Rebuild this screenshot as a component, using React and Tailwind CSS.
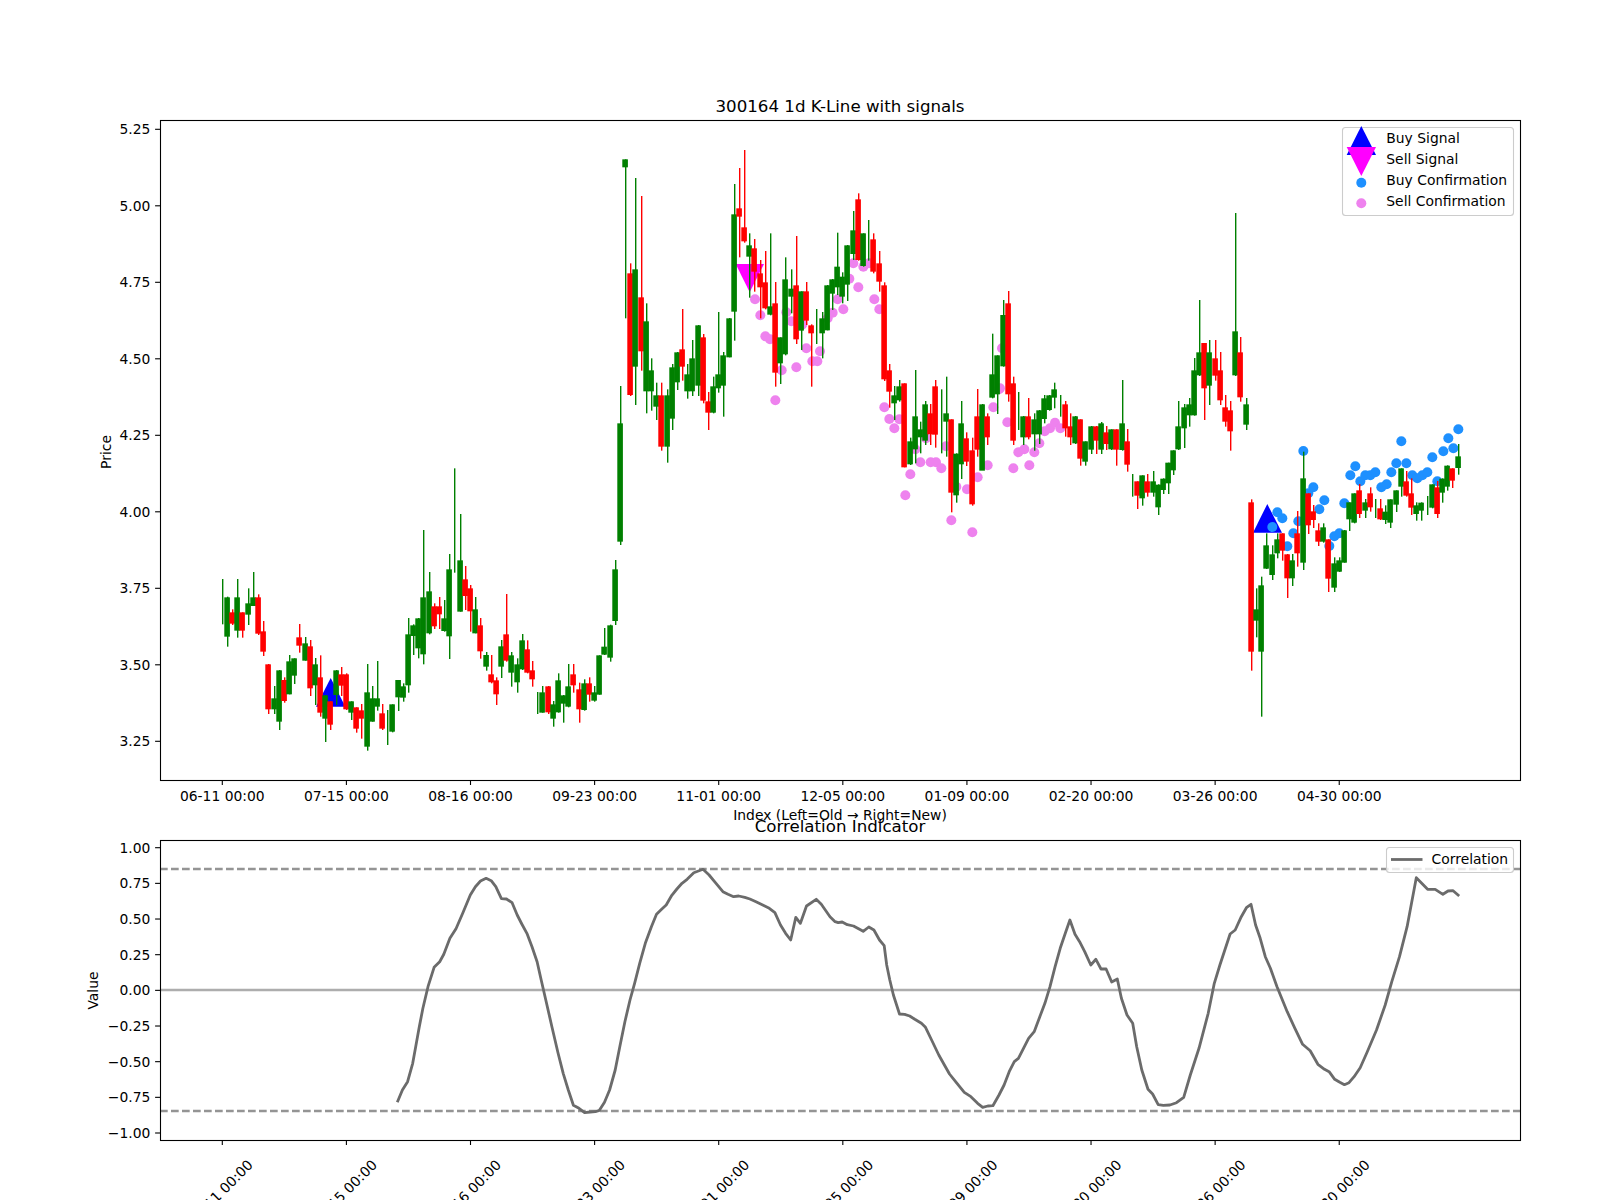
const up = (y) => 129.3 + (5.25 - y) * 306;
const low = (v) => 990.35 - 142.65 * v;
const tx = (i) => 222.3 + 5.171 * i;
const tickX = (k) => tx(k * 24);

// candles read off crops: [colour, wickTop, wickBottom, bodyTop, bodyBottom], y in crop px (3x) from y0
const groups = [
  { y0: 530, rows: [
    ["g",147,283],["g",200,350,202,320],["r",238,285,247,281],["g",147,323,202,302],["r",247,323,247,302],
    ["g",175,285,220,254],["g",126,228,202,228],["r",193,315,202,311],["r",273,378,304,365],["r",402,552,403,538],
    ["g",468,552,505,538],["g",420,600,421,575],["r",442,518,450,513],["g",375,493,394,493],["g",385,462,385,437],
    ["r",282,368,322,347],["g",321,392,340,392],["r",330,498,349,475],["g",384,525,403,466],["r",376,560,442,548],
    ["g",495,636,496,566],["r",513,600,514,584],["g",420,525,421,495],["r",411,498,433,467],["r",430,540,433,538],
    ["g",514,570,514,548],["r",532,608,532,596],["r",522,626,541,566],["g",402,662,487,650],["g",468,575,505,575],
    ["g",393,542,505,530],["r",522,600,550,596],["g",540,645],["g",523,607,523,605],["g",450,543,450,502],
  ] },
  { y0: 450, rows: [
    ["g",700,755,709,743],["g",504,728,553,706],["g",523,615,526,558],["g",504,625,505,595],["g",240,643,442,613],
    ["g",366,553,424,550],["r",460,537,469,529],["r",441,537,469,493],["g",450,545,505,543],["g",312,627,358,559],
    ["g",55,368],["g",192,485,331,485],["r",348,480,388,438],["r",405,545,415,484],["g",441,550,478,550],
    ["r",504,626,526,604],["g",606,662,615,650],["r",615,700,673,697],["r",682,765,691,733],["g",570,684,589,650],
    ["r",432,635,553,632],["g",606,710,616,668],["g",625,728,643,697],["g",552,660,571,658],["r",571,670,598,668],
    ["r",633,710,661,688],["g",726,792],["g",708,788,727,788],["r",708,792,709,787],["g",753,830,763,806],
    ["g",670,788,691,787],["g",735,818,736,761],["g",642,772,709,770],["r",642,728,673,706],["r",698,818,718,778],
    ["g",688,782,700,780],["r",682,755,700,734],["g",708,755,727,752],["g",616,734,616,734],["g",534,615,590,614],
    ["g",524,635,526,623],["g",330,525,358,513],
  ] },
  { y0: 140, rows: [
    ["g",738,1215,850,1205],["g",58,535,58,82],["r",370,768,400,765],["g",114,795,388,680],["r",168,692,472,634],
    ["g",490,820,544,754],["g",655,812,691,754],["g",728,840,766,800],["r",728,932,766,920],["g",748,968,766,920],
    ["g",672,870,682,836],["g",636,750,637,727],["r",507,722,628,680],["g",672,776,703,754],["g",600,768,655,754],
    ["g",555,768,556,737],["r",582,790,592,782],["r",756,870,784,818],["g",710,820,739,818],["g",516,758,703,745],
    ["g",636,830,646,737],["g",534,652,535,652],["g",132,602,223,515],["r",84,352,205,230],["r",30,308,262,304],
    ["g",280,473,316,350],["r",297,455,325,395],["r",360,535,400,442],["r",333,508,427,505],["g",280,526,499,524],
    ["r",426,740,490,698],["g",592,732,592,670],["g",352,646,418,643],["g",388,520,446,470],["r",288,612,436,598],
    ["g",454,630,454,572],["r",426,555,454,542],["r",553,740,556,580],
  ] },
  { y0: 180, rows: [
    ["g",387,492],["g",396,535,415,460],["g",315,451,316,451],["g",297,390,298,341],["g",158,345,260,322],
    ["g",277,370,290,350],["g",195,363,196,314],["g",93,240,151,222],["r",40,242,58,240],["g",160,260,160,258],
    ["g",120,242],["r",160,280,178,275],["r",213,335,250,305],["r",307,603,316,598],["r",552,683,571,635],
    ["g",618,720,646,670],["g",600,665,619,661],["r",610,862,610,862],["g",773,855,784,853],["g",570,850,709,808],
    ["g",725,820,748,772],["g",663,795,673,782],["r",672,795,700,763],["r",600,803,619,764],["g",628,820],
    ["g",590,830,700,725],["r",718,997,718,938],["g",820,968,821,946],["g",663,897,730,853],["r",757,858,775,845],
    ["r",773,977,811,973],["r",627,830,709,809],["g",672,870,673,872],["r",700,795,709,772],["g",461,655,583,653],
    ["g",526,702,526,643],["g",360,560,405,559],["r",333,665,370,643],["r",590,795,610,782],["g",636,750],
  ] },
  { y0: 270, rows: [
    ["g",438,525,439,502],["r",384,508,439,502],["g",430,542,448,493],["g",420,522,421,493],["g",375,460,385,447],
    ["g",375,422,376,420],["g",338,415,358,383],["g",375,440],["r",393,500,403,475],["r",430,525,469,502],
    ["g",438,522,439,520],["r",448,587,448,566],["g",514,587,514,575],["g",468,552,469,539],["r",468,552,469,512],
    ["g",456,552,460,539],["r",468,540,487,522],["g",478,540,478,538],["r",478,587,478,539],["g",330,542,460,540],
    ["r",477,605,514,584],["g",612,680],["r",634,717,634,677],["g",616,707,616,685],["r",612,680,634,668],
    ["g",603,680,634,668],["g",643,735,644,712],["g",625,672,626,660],["g",578,672,578,640],["g",541,615,541,601],
    ["g",393,540,469,538],["g",402,534,412,475],["g",384,470,403,436],["g",264,437,301,436],["g",90,318,247,316],
    ["r",219,450,219,355],["g",210,405,247,347],["r",210,332,265,317],["r",246,405,301,391],["r",375,470,412,455],
    ["r",393,542,421,484],["g",-171,318,184,316],["r",201,395,247,382],["g",384,480,403,464],
  ] },
  { y0: 400, rows: [
    ["r",298,812,307,755],["g",565,712,628,662],["g",530,950,556,755],["g",400,507,436,506],["g",436,540,463,525],
    ["g",400,475,418,460],["r",400,482,400,452],["r",462,594,463,535],["g",462,558,481,535],["r",333,500,400,460],
    ["g",155,510,235,488],["r",280,402,280,376],["r",315,384,334,360],["r",370,438,391,425],["g",370,428,382,425],
    ["r",418,576,418,536],["g",472,576,490,563],["g",472,516,481,515],["g",390,488,391,488],["g",307,393,307,358],
    ["g",280,370,280,368],["r",252,354,271,342],["g",297,354,307,332],["r",262,335,280,322],["g",297,354],
    ["r",297,360,325,358],["g",316,372,335,360],["g",298,384,298,368],["g",271,336,271,314],["g",205,290,205,260],
    ["r",213,290,244,287],["r",235,345,280,323],["g",307,362,316,342],["g",307,362,308,332],["g",288,345],
    ["g",253,325,253,323],["r",243,354,262,342],["g",235,308,236,278],["g",196,272,197,260],["r",205,264,205,242],
    ["g",132,224,169,204],
  ] },
];
const candles = groups.flatMap((g) => g.rows.map(([c, wt, wb, bt, bb]) => ({
  c: c === "g" ? "#008000" : "#ff0000",
  wt: g.y0 + wt / 3, wb: g.y0 + wb / 3,
  bt: bt == null ? null : g.y0 + bt / 3, bb: bb == null ? null : g.y0 + bb / 3,
})));

// [x0, y0, points in 3x crop px]
const pinkSets = [
  [600, 140, [[465,478],[481,526],[496,589],[510,598],[559,517],[574,544],[607,553],[619,625],[637,664],[652,664],[545,691],[589,682],[526,781],[660,634]]],
  [800, 180, [[5,435],[83,415],[98,398],[113,358],[130,388],[148,296],[160,250],[175,322],[190,260],[207,250],[223,358],[238,388],[253,682],[268,717],[283,745],[298,718],[316,946],[331,883],[346,808],[361,847],[378,775],[392,847],[408,847],[424,865],[438,799],[454,1021],[469,920],[501,928],[517,1057],[533,892],[563,856],[580,682],[597,628],[606,505]]],
  [1000, 270, [[0,355],[22,457],[40,595],[55,547],[73,538],[88,586],[103,547],[118,520],[134,484],[150,475],[165,458],[181,475]]],
];
const blueSets = [
  [1220, 400, [[157,381],[172,337],[187,355],[202,439],[220,400],[235,364],[250,153],[265,280],[280,262],[298,328],[313,301],[328,438],[343,409],[358,400],[373,310],[391,226],[406,199],[421,244],[436,226],[451,226],[466,217],[484,262],[500,253],[514,217],[529,190],[544,124],[559,190],[577,226],[592,235],[607,226],[622,217],[637,172],[652,244],[670,154],[685,115],[700,145],[715,88]]],
];
const toAbs = (sets) => sets.flatMap(([x0, y0, pts]) => pts.map(([x, y]) => [x0 + x / 3, y0 + y / 3]));

// correlation line, crops are 1.96x wide and 3x tall
const corrA = [[622,997],[632,960],[642,935],[652,880],[658,830],[665,770],[672,715],[682,650],[694,592],[705,575],[713,553],[725,505],[737,476],[750,430],[765,375],[775,350],[785,333],[796,325],[806,332],[815,350],[826,386],[836,387],[847,398],[857,435],[866,462],[876,490],[886,530],[896,575],[904,630],[913,690],[925,770],[937,850],[947,910],[957,960],[967,1006],[978,1015],[989,1028],[1000,1026],[1010,1025],[1018,1021],[1028,997],[1038,960],[1049,900],[1058,830],[1068,755],[1078,690],[1087,640],[1097,580],[1108,520],[1120,470],[1130,433],[1140,418],[1149,405],[1160,376],[1170,357],[1180,340],[1190,328],[1203,308],[1221,298],[1233,315],[1245,337],[1260,365],[1270,373],[1281,380],[1291,378],[1303,382],[1313,387],[1325,395],[1338,405],[1351,415],[1362,428],[1373,465],[1383,490],[1393,510],[1403,442],[1412,460],[1424,408],[1443,388],[1453,403],[1470,440],[1480,455],[1486,458],[1494,456],[1504,464],[1516,468],[1535,484],[1546,471],[1556,480],[1567,510]];
const corrB = [[165,527],[170,585],[176,630],[183,675],[195,732],[205,733],[215,738],[225,748],[238,760],[246,772],[258,810],[272,855],[283,885],[293,912],[305,935],[322,967],[335,980],[348,1000],[358,1012],[368,1008],[378,1007],[390,975],[400,945],[410,905],[420,875],[428,865],[438,835],[448,805],[459,785],[470,740],[480,700],[490,650],[500,590],[510,535],[520,490],[529,450],[539,493],[548,515],[558,545],[570,585],[580,568],[590,597],[600,597],[611,636],[622,627],[630,685],[641,735],[652,760],[660,830],[670,900],[682,958],[691,972],[702,1004],[712,1006],[725,1005],[738,998],[752,982],[765,915],[782,835],[800,730],[812,640],[823,585],[843,492],[853,480],[865,440],[875,413],[884,403],[893,465],[902,505],[912,560],[922,595],[935,650],[955,725],[970,775],[985,823],[1000,842],[1015,883],[1028,898],[1037,905],[1048,928],[1058,937],[1067,944],[1076,938],[1086,920],[1098,893],[1112,845],[1130,780],[1147,705],[1160,635],[1175,560],[1190,470],[1208,323],[1230,358],[1245,358],[1260,373],[1270,363],[1280,362],[1292,378]];
const corrPoints = [
  ...corrA.map(([x, y]) => [80 + x / 1.96, 770 + y / 3]),
  ...corrB.map(([x, y]) => [800 + x / 1.96, 770 + y / 3]),
].map((p) => p.map((n) => n.toFixed(1)).join(",")).join(" ");

const dates = ["06-11 00:00", "07-15 00:00", "08-16 00:00", "09-23 00:00", "11-01 00:00", "12-05 00:00", "01-09 00:00", "02-20 00:00", "03-26 00:00", "04-30 00:00"];
const priceTicks = ["5.25", "5.00", "4.75", "4.50", "4.25", "4.00", "3.75", "3.50", "3.25"];
const corrTicks = ["1.00", "0.75", "0.50", "0.25", "0.00", "−0.25", "−0.50", "−0.75", "−1.00"];

function Candle({ d, i }) {
  const x = Math.round(tx(i) - 0.5);
  return (
    <g fill={d.c}>
      <rect x={x} y={d.wt} width="1.4" height={d.wb - d.wt} />
      {d.bt != null && <rect x={x - 2.7} y={d.bt} width="5.6" height={d.bb - d.bt} />}
    </g>
  );
}

function YTicks({ labels, pos }) {
  return labels.map((t) => {
    const y = pos(parseFloat(t.replace("−", "-")));
    return (
      <g key={t}>
        <line x1="155.1" x2="160" y1={y} y2={y} stroke="#000" strokeWidth="1.1" />
        <text x="150.4" y={y + 5} textAnchor="end">{t}</text>
      </g>
    );
  });
}

export default function App() {
  return (
    <div className="w-[1600px] h-[1200px] overflow-hidden bg-white">
      <svg width="1600" height="1200" viewBox="0 0 1600 1200" className="block font-['DejaVu_Sans',sans-serif] text-[13.89px]" fill="#000">
        {/* price panel */}
        <text x="840" y="111.7" textAnchor="middle" className="text-[16.67px]">300164 1d K-Line with signals</text>
        <polygon points="330.7,678 316,706.7 345.4,706.7" fill="#0000ff" />
        <polygon points="1267.3,504 1253,532.7 1282,532.7" fill="#0000ff" />
        <polygon points="749.7,292.3 735.7,264 764,264" fill="#ff00ff" />
        {toAbs(pinkSets).map(([x, y], i) => <circle key={i} cx={x} cy={y} r="5" fill="#ee82ee" />)}
        {toAbs(blueSets).map(([x, y], i) => <circle key={i} cx={x} cy={y} r="5" fill="#1e90ff" />)}
        {candles.map((d, i) => <Candle key={i} d={d} i={i} />)}
        <rect x="160.5" y="120.5" width="1360" height="660" fill="none" stroke="#000" strokeWidth="1.1" />
        <YTicks labels={priceTicks} pos={up} />
        <text transform="translate(111 452) rotate(-90)" textAnchor="middle">Price</text>
        {dates.map((t, k) => {
          const x = tickX(k);
          return (
            <g key={t}>
              <line x1={x} x2={x} y1="780" y2="785" stroke="#000" strokeWidth="1.1" />
              <text x={x} y="801" textAnchor="middle">{t}</text>
            </g>
          );
        })}
        <text x="840" y="820" textAnchor="middle">Index (Left=Old → Right=New)</text>

        {/* legend */}
        <rect x="1342.5" y="127.5" width="171" height="88" rx="3" fill="#fff" fillOpacity="0.8" stroke="#ccc" strokeWidth="1.1" />
        <polygon points="1361.3,126 1346.7,155 1376,155" fill="#0000ff" />
        <polygon points="1361.3,176 1346.7,147 1376,147" fill="#ff00ff" />
        <circle cx="1361.3" cy="182.7" r="5" fill="#1e90ff" />
        <circle cx="1361.3" cy="203.3" r="5" fill="#ee82ee" />
        <text x="1386.3" y="143.3">Buy Signal</text>
        <text x="1386.3" y="164.3">Sell Signal</text>
        <text x="1386.3" y="185.3">Buy Confirmation</text>
        <text x="1386.3" y="206.3">Sell Confirmation</text>

        {/* correlation panel */}
        <text x="840" y="832" textAnchor="middle" className="text-[16.67px]">Correlation Indicator</text>
        <line x1="160" x2="1520" y1="990" y2="990" stroke="#adadad" strokeWidth="2.4" />
        <line x1="160" x2="1520" y1="869" y2="869" stroke="#949494" strokeWidth="2.4" strokeDasharray="7.7 3.3" />
        <line x1="160" x2="1520" y1="1111" y2="1111" stroke="#949494" strokeWidth="2.4" strokeDasharray="7.7 3.3" />
        <polyline points={corrPoints} fill="none" stroke="#6b6b6b" strokeWidth="2.8" strokeLinejoin="round" />
        <rect x="160.5" y="840.5" width="1360" height="300" fill="none" stroke="#000" strokeWidth="1.1" />
        <YTicks labels={corrTicks} pos={low} />
        <text transform="translate(98 990.5) rotate(-90)" textAnchor="middle">Value</text>
        {dates.map((t, k) => {
          const x = tickX(k);
          return (
            <g key={t}>
              <line x1={x} x2={x} y1="1140" y2="1145" stroke="#000" strokeWidth="1.1" />
              <text transform={`translate(${x - 1.3} 1193) rotate(-45)`} textAnchor="middle" dominantBaseline="middle">{t}</text>
            </g>
          );
        })}
        <rect x="1386.5" y="847.5" width="127" height="25" rx="3" fill="#fff" fillOpacity="0.8" stroke="#ccc" strokeWidth="1.1" />
        <line x1="1391" x2="1422.5" y1="859.5" y2="859.5" stroke="#6b6b6b" strokeWidth="2.8" />
        <text x="1431.6" y="864">Correlation</text>
      </svg>
    </div>
  );
}
